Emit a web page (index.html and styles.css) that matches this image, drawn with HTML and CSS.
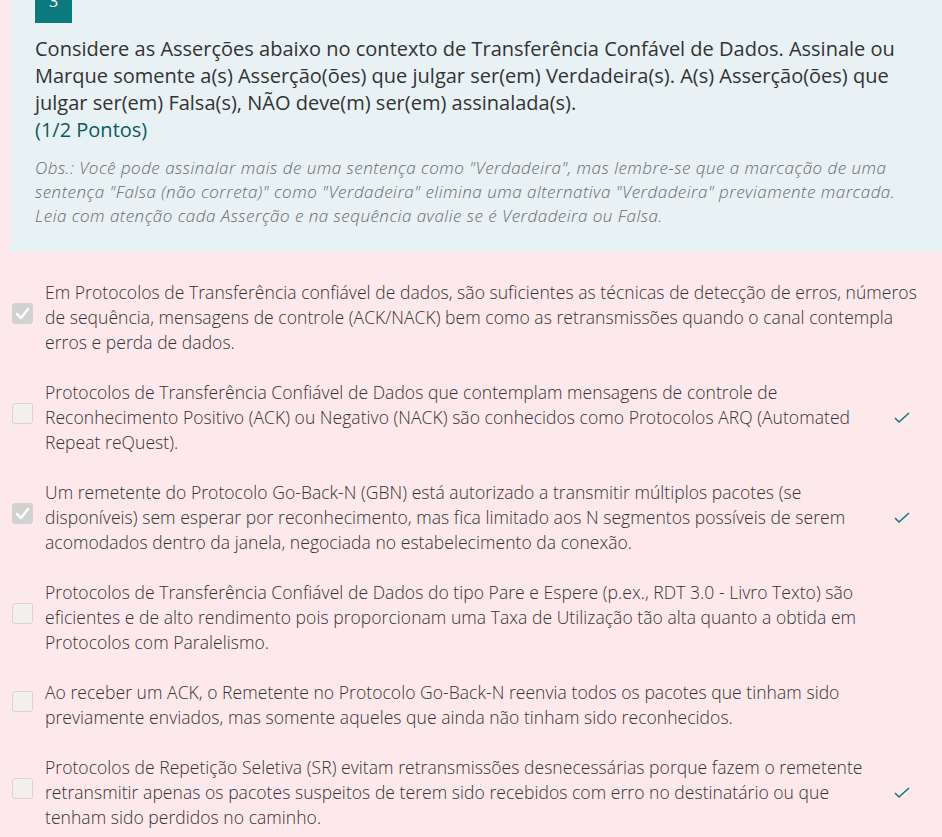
FILE: index.html
```html
<!DOCTYPE html>
<html lang="pt-BR">
<head>
<meta charset="utf-8">
<title>Questão 3</title>
<link rel="stylesheet" href="styles.css">
</head>
<body>
<div class="page">
  <header class="question">
    <div class="badge">3</div>
    <p class="title">Considere as Asserções abaixo no contexto de Transferência Confável de Dados. Assinale ou Marque somente a(s) Asserção(ões) que julgar ser(em) Verdadeira(s). A(s) Asserção(ões) que julgar ser(em) Falsa(s), NÃO deve(m) ser(em) assinalada(s).<span class="points">(1/2 Pontos)</span></p>
    <p class="obs">Obs.: Você pode assinalar mais de uma sentença como "Verdadeira", mas lembre-se que a marcação de uma sentença "Falsa (não correta)" como "Verdadeira" elimina uma alternativa "Verdadeira" previamente marcada. Leia com atenção cada Asserção e na sequência avalie se é Verdadeira ou Falsa.</p>
  </header>
  <ul class="options">
    <li class="option">
      <span class="box checked"><svg viewBox="0 0 21 21" width="21" height="21"><polyline points="5,11 9,15 16,6" fill="none" stroke="#fff" stroke-width="2.4" stroke-linecap="round" stroke-linejoin="round"/></svg></span>
      <span class="text">Em Protocolos de Transferência confiável de dados, são suficientes as técnicas de detecção de erros, números de sequência, mensagens de controle (ACK/NACK) bem como as retransmissões quando o canal contempla erros e perda de dados.</span>
    </li>
    <li class="option">
      <span class="box"></span>
      <span class="text">Protocolos de Transferência Confiável de Dados que contemplam mensagens de controle de Reconhecimento Positivo (ACK) ou Negativo (NACK) são conhecidos como Protocolos ARQ (Automated Repeat reQuest).</span>
      <span class="correct"><svg viewBox="0 0 16 12" width="16" height="12"><polyline points="1,6 5,10 15,1" fill="none" stroke="#0b7a7e" stroke-width="1.6"/></svg></span>
    </li>
    <li class="option">
      <span class="box checked"><svg viewBox="0 0 21 21" width="21" height="21"><polyline points="5,11 9,15 16,6" fill="none" stroke="#fff" stroke-width="2.4" stroke-linecap="round" stroke-linejoin="round"/></svg></span>
      <span class="text">Um remetente do Protocolo Go-Back-N (GBN) está autorizado a transmitir múltiplos pacotes (se disponíveis) sem esperar por reconhecimento, mas fica limitado aos N segmentos possíveis de serem acomodados dentro da janela, negociada no estabelecimento da conexão.</span>
      <span class="correct"><svg viewBox="0 0 16 12" width="16" height="12"><polyline points="1,6 5,10 15,1" fill="none" stroke="#0b7a7e" stroke-width="1.6"/></svg></span>
    </li>
    <li class="option">
      <span class="box"></span>
      <span class="text">Protocolos de Transferência Confiável de Dados do tipo Pare e Espere (p.ex., RDT 3.0 - Livro Texto) são eficientes e de alto rendimento pois proporcionam uma Taxa de Utilização tão alta quanto a obtida em Protocolos com Paralelismo.</span>
    </li>
    <li class="option">
      <span class="box"></span>
      <span class="text">Ao receber um ACK, o Remetente no Protocolo Go-Back-N reenvia todos os pacotes que tinham sido previamente enviados, mas somente aqueles que ainda não tinham sido reconhecidos.</span>
    </li>
    <li class="option">
      <span class="box"></span>
      <span class="text">Protocolos de Repetição Seletiva (SR) evitam retransmissões desnecessárias porque fazem o remetente retransmitir apenas os pacotes suspeitos de terem sido recebidos com erro no destinatário ou que tenham sido perdidos no caminho.</span>
      <span class="correct"><svg viewBox="0 0 16 12" width="16" height="12"><polyline points="1,6 5,10 15,1" fill="none" stroke="#0b7a7e" stroke-width="1.6"/></svg></span>
    </li>
  </ul>
</div>
</body>
</html>
```
FILE: styles.css
```css
html, body {
  margin: 0;
  padding: 0;
  background: #fde9eb;
}
body {
  font-family: "Open Sans", "Noto Sans", sans-serif;
  color: #333333;
}
.page {
  padding-left: 10px;
  min-height: 837px;
  overflow: hidden;
}
.question {
  background: #e8f1f4;
  padding: 0 20px 24px 25px;
}
.badge {
  width: 37px;
  height: 44px;
  margin-top: -21px;
  background: #0b7a7e;
  color: #ffffff;
  font-size: 16px;
  line-height: 44px;
  text-align: center;
}
.title {
  margin: 12px 0 0;
  font-size: 20px;
  letter-spacing: 0;
  line-height: 27px;
  color: #333333;
}
.points {
  display: block;
  color: #0b5c5e;
}
.obs {
  margin: 13px 0 0;
  font-size: 17px;
  letter-spacing: 0.48px;
  line-height: 24px;
  font-style: italic;
  font-weight: 300;
  color: #6a6a6a;
}
.options {
  list-style: none;
  margin: 0;
  padding: 28px 0 0 2px;
  display: flex;
  flex-direction: column;
  gap: 25px;
}
.option {
  display: flex;
  align-items: center;
  gap: 12px;
  padding-right: 22px;
}
.box {
  flex: none;
  width: 21px;
  height: 21px;
  box-sizing: border-box;
  border: 1px solid #dcd2d3;
  border-radius: 3px;
  background: #f4efef;
  margin-bottom: 8px;
}
.box.checked {
  background: #d2d2d2;
  border-color: #d2d2d2;
}
.box svg {
  display: block;
  margin: -1px;
}
.text {
  flex: 1;
  font-size: 17.5px;
  letter-spacing: 0.05px;
  font-weight: 300;
  line-height: 25px;
  color: #333333;
}
.correct {
  flex: none;
  width: 26px;
  display: flex;
  justify-content: flex-start;
}
.correct svg {
  display: block;
}
```
